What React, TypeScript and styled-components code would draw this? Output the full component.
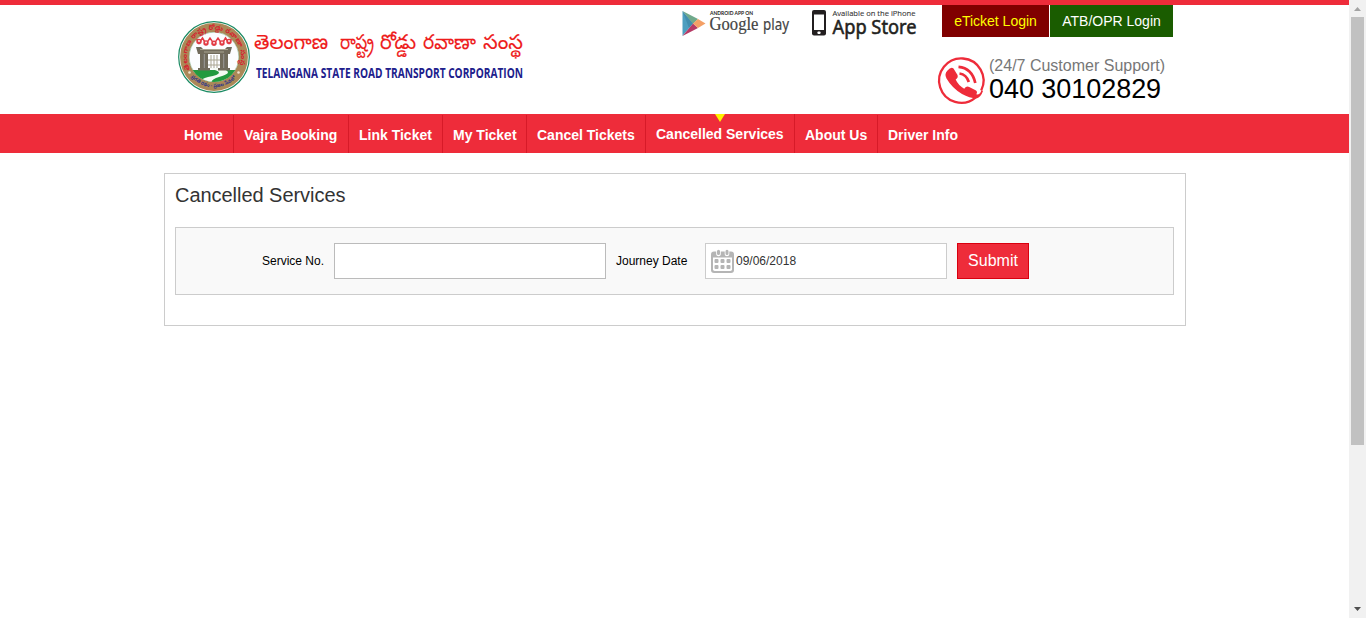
import React from 'react';
import styled, { createGlobalStyle } from 'styled-components';

const RED = '#ee2c3a';

const GlobalStyle = createGlobalStyle`
  * { box-sizing: border-box; }
  body {
    margin: 0;
    overflow: hidden;
    background: #fff;
    color: #000;
    font-family: "Liberation Sans", Arial, sans-serif;
  }
  svg { overflow: visible; flex-shrink: 0; }
`;

const Screen = styled.div`
  display: flex;
  width: 1366px;
  height: 618px;
`;

const Page = styled.div`
  flex: 1;
  min-width: 0;
`;

const Header = styled.header`
  display: flex;
  height: 114px;
  border-top: 5px solid ${RED};
  padding-left: 178px;
`;

const Brand = styled.div`
  display: flex;
  gap: 4px;
  width: 503px;
  padding-top: 16px;
`;

const Stores = styled.div`
  display: flex;
  width: 261px;
`;

const Contact = styled.div`
  width: 231px;
`;

const Logins = styled.div`
  display: flex;
  gap: 1px;
`;

const LoginLink = styled.a<{ $bg: string; $color: string; $width: number }>`
  width: ${(p) => p.$width}px;
  height: 32px;
  background: ${(p) => p.$bg};
  color: ${(p) => p.$color};
  font-size: 14px;
  line-height: 32px;
  text-align: center;
`;

const Support = styled.div`
  display: flex;
  gap: 3px;
  margin: 19px 0 0 -4px;
`;

const SupportText = styled.div`
  padding-top: 1px;
  white-space: nowrap;
`;

const SupportLabel = styled.div`
  color: #777;
  font-size: 16px;
  line-height: 18px;
`;

const SupportNumber = styled.div`
  font-size: 27px;
  letter-spacing: -0.05px;
  line-height: 29px;
`;

const Nav = styled.nav`
  display: flex;
  height: 39px;
  padding-left: 174px;
  background: ${RED};
`;

const NavItem = styled.a<{ $width: number; $active?: boolean; $last?: boolean }>`
  position: relative;
  width: ${(p) => p.$width}px;
  height: ${(p) => (p.$active ? 39 : 38)}px;
  margin-top: ${(p) => (p.$active ? 0 : 1)}px;
  padding-left: 10px;
  border-right: ${(p) => (p.$last ? 'none' : '1px solid #d71a28')};
  color: #fff;
  font-size: 14px;
  font-weight: bold;
  line-height: 40px;
  white-space: nowrap;
`;

const ActiveMark = styled.span`
  position: absolute;
  top: 0;
  left: 69px;
  border: 5px solid transparent;
  border-top: 8px solid #fff000;
  border-bottom: 0;
`;

const Panel = styled.main`
  width: 1022px;
  height: 153px;
  margin: 20px 0 0 164px;
  padding: 8px 11px 0 10px;
  border: 1px solid #ccc;
`;

const Title = styled.h1`
  margin: 0 0 18px;
  color: #333;
  font-size: 20px;
  font-weight: normal;
  letter-spacing: -0.04px;
  line-height: 27px;
`;

const SearchForm = styled.div`
  display: flex;
  height: 68px;
  padding: 15px 0 0 86px;
  border: 1px solid #ccc;
  background: #f9f9f9;
`;

const Label = styled.label<{ $width: number }>`
  width: ${(p) => p.$width}px;
  font-size: 12px;
  line-height: 36px;
  white-space: nowrap;
`;

const Field = styled.div<{ $width: number; $gap: number; $border: string }>`
  display: flex;
  align-items: center;
  gap: 2px;
  width: ${(p) => p.$width}px;
  height: 36px;
  margin-right: ${(p) => p.$gap}px;
  padding-left: 5px;
  border: 1px solid ${(p) => p.$border};
  background: #fff;
  color: #333;
  font-size: 12px;
`;

const SubmitButton = styled.button`
  width: 72px;
  height: 36px;
  padding: 0;
  border: 1px solid #d9000f;
  background: ${RED};
  color: #fff;
  font-family: inherit;
  font-size: 16px;
`;

const Scrollbar = styled.div`
  display: flex;
  flex-direction: column;
  align-items: center;
  width: 17px;
  background: #f1f1f1;
`;

const ScrollThumb = styled.div`
  width: 13px;
  height: 428px;
  margin-bottom: 156px;
  background: #c1c1c1;
`;

const Emblem = () => (
  <svg width="72" height="72" viewBox="0 0 72 72">
    <defs>
      <path id="arcTop" d="M12.2 48.5A27 27 0 1 1 59.8 48.5" />
      <path id="arcBottom" d="M10 52A31 31 0 0 0 62 52" />
      <clipPath id="disc"><circle cx="36" cy="36" r="25" /></clipPath>
    </defs>
    <circle cx="36" cy="36" r="35.3" fill="#fff" stroke="#198a62" strokeWidth="1.2" />
    <circle cx="36" cy="36" r="29.4" fill="none" stroke="#ab8857" strokeWidth="9" />
    <circle cx="36" cy="36" r="24.8" fill="#fcfdff" stroke="#6d9c70" strokeWidth=".5" />
    <g clipPath="url(#disc)">
      <path d="M9 49h54v15H9z" fill="#229a3f" />
      <path d="M30 47q22 5 0 9q-10 3-11 8h15q-3-5 7-8q18-5 0-9z" fill="#f4faf3" />
      <g fill="#e23c45">
        <circle cx="21" cy="20.500" r="2.700" />
        <circle cx="28" cy="22" r="2.700" />
        <circle cx="36" cy="22.300" r="2.700" />
        <circle cx="44" cy="22" r="2.700" />
        <circle cx="51" cy="20.500" r="2.700" />
      </g>
      <path d="M18 17l3 5 3.500-5 3.500 6 4-6 4 6 4-6 4 6 3.500-6 3.500 5 3-5" fill="none" stroke="#e23c45" strokeWidth="1.500" />
      <g fill="#fff">
        <circle cx="21" cy="20" r=".9" />
        <circle cx="28" cy="21.500" r=".9" />
        <circle cx="36" cy="21.800" r=".9" />
        <circle cx="44" cy="21.500" r=".9" />
        <circle cx="51" cy="20" r=".9" />
      </g>
    </g>
    <g fill="#716b5c">
      <path d="M18 26h5l2 2h22l2-2h5l-2 7H20z" />
      <path d="M22 32h3.500v16H22zM27 32h3v16h-3zM42 32h3v16h-3zM46.500 32H50v16h-3.500z" />
      <path d="M20 47h12v2.500H20zM40 47h12v2.500H40z" />
    </g>
    <path d="M22 28.500h28M26 31h20M33 34v13M36 34v13M39 34v13M30 39h12M30 44h12" stroke="#aaa692" strokeWidth="1" />
    <path d="M26 33v14M46 33v14" stroke="#4e4a40" strokeWidth="1.200" />
    <circle cx="11.500" cy="51.500" r="1.300" fill="#ece2ce" />
    <circle cx="60.500" cy="51.500" r="1.300" fill="#ece2ce" />
    <text fill="#d61f30" fontFamily='"Noto Sans Telugu", "Noto Sans", sans-serif' fontWeight="bold" fontSize="6.800">
      <textPath href="#arcTop" textLength="106" lengthAdjust="spacingAndGlyphs">తెలంగాణ రాష్ట్ర రోడ్డు రవాణా సంస్థ</textPath>
    </text>
    <text fill="#2c348c" fontFamily='"Noto Sans Telugu", "Noto Sans", sans-serif' fontWeight="bold" fontSize="5">
      <textPath href="#arcBottom" startOffset="5" textLength="50" lengthAdjust="spacingAndGlyphs">ప్రగతి రథం - ప్రజల సేవలో</textPath>
    </text>
  </svg>
);

const Wordmark = () => (
  <svg width="275" height="72">
    <g fill="#ee1c1c" stroke="#ee1c1c" strokeWidth=".15" fontFamily='"Noto Sans Telugu", "Noto Sans", sans-serif' fontSize="20.500">
      <text x="0" y="28" textLength="74" lengthAdjust="spacingAndGlyphs">తెలంగాణ</text>
      <text x="86" y="28" textLength="34" lengthAdjust="spacingAndGlyphs">రాష్ట్ర</text>
      <text x="126" y="28" textLength="36" lengthAdjust="spacingAndGlyphs">రోడ్డు</text>
      <text x="169" y="28" textLength="53" lengthAdjust="spacingAndGlyphs">రవాణా</text>
      <text x="229" y="28" textLength="40" lengthAdjust="spacingAndGlyphs">సంస్థ</text>
    </g>
    <text x="2" y="56.700" fill="#20208c" fontFamily='"Open Sans", sans-serif' fontWeight="bold" fontSize="14.500" textLength="267" lengthAdjust="spacingAndGlyphs">
      TELANGANA STATE ROAD TRANSPORT CORPORATION
    </text>
  </svg>
);

const GooglePlay = () => (
  <svg width="130" height="36">
    <path d="M1.500 6v25L12 18.500z" fill="#4d9fc0" />
    <path d="M1.500 6l15.500 8-5 5z" fill="#70a98b" />
    <path d="M1.500 31L17 23l-5-4.500z" fill="#b63a65" />
    <path d="M17 14l7.500 4.500L17 23l-5-4.500z" fill="#f4a066" />
    <path d="M1.500 6L12 18.500 8 23z" fill="#367e9e" opacity=".5" />
    <text x="29" y="9.500" fill="#222" fontFamily="Lato, sans-serif" fontWeight="bold" fontSize="4.900" textLength="43" lengthAdjust="spacingAndGlyphs">ANDROID APP ON</text>
    <text x="28.500" y="25" fill="#444" stroke="#444" strokeWidth=".2" fontFamily='"Liberation Serif", serif' fontSize="18.500" textLength="49" lengthAdjust="spacingAndGlyphs">Google</text>
    <text x="82" y="25" fill="#444" stroke="#444" strokeWidth=".2" fontFamily='"Noto Sans", sans-serif' fontSize="17" textLength="26" lengthAdjust="spacingAndGlyphs">play</text>
  </svg>
);

const AppStore = () => (
  <svg width="110" height="36">
    <rect x="1" y="5" width="14" height="25.500" rx="2" fill="#231f20" />
    <rect x="3" y="9.500" width="10" height="15.500" fill="#fff" />
    <rect x="6.500" y="26.500" width="3" height="2.500" rx=".7" fill="#fff" />
    <text x="21.500" y="10.700" fill="#333" stroke="#333" strokeWidth=".1" fontFamily='"Open Sans", sans-serif' fontSize="7.800" textLength="83" lengthAdjust="spacingAndGlyphs">Available on the iPhone</text>
    <text x="21.500" y="29" fill="#231f20" stroke="#231f20" strokeWidth=".55" fontFamily='"Noto Sans", sans-serif' fontSize="19.500" textLength="84" lengthAdjust="spacingAndGlyphs">App Store</text>
  </svg>
);

const SupportIcon = () => (
  <svg width="48" height="48" viewBox="0 0 48 48">
    <path d="M43.200 34.500A22.200 22.200 0 1 0 37.500 41.700" fill="none" stroke={RED} strokeWidth="2.300" />
    <path
      d="M9.500 14.500Q13 10.500 15.500 12.500L19.500 19Q20.500 21.500 17.700 23.500Q20 29 26.200 32.700Q28.500 29.600 31.200 31L37.600 34.300Q40 35.900 38.300 38.300Q42 39 43.300 34.500L45 35Q43 41 38.500 42.500Q31.500 42 24 38Q14 32 8.500 22.500Q6 18 9.500 14.500Z"
      fill={RED}
    />
    <path d="M20.500 10.800Q34 12 37.300 27M21.500 17.500Q28.500 18.500 30.800 26" fill="none" stroke={RED} strokeWidth="2.700" />
  </svg>
);

const CalendarIcon = () => (
  <svg width="23" height="24" viewBox="0 0 23 24">
    <path d="M3 2.500h17q3 0 3 3V21q0 3-3 3H3q-3 0-3-3V5.500q0-3 3-3z" fill="#b5b5b5" />
    <path d="M2 8.500h19v11.800q0 1.700-1.700 1.700H3.700Q2 22 2 20.300z" fill="#fff" />
    <path d="M7.500 2v3M16 2v3" stroke="#fff" strokeWidth="4.600" strokeLinecap="round" />
    <path d="M7.500 2.200v2.300M16 2.200v2.300" stroke="#b5b5b5" strokeWidth="3" strokeLinecap="round" />
    <g fill="#b5b5b5">
      {[3.5, 9.5, 15.5].map((x) =>
        [10, 16].map((y) => <rect key={`${x}-${y}`} x={x} y={y} width="4" height="4" rx="1" />)
      )}
    </g>
  </svg>
);

const NAV_ITEMS = [
  { label: 'Home', width: 60 },
  { label: 'Vajra Booking', width: 115 },
  { label: 'Link Ticket', width: 94 },
  { label: 'My Ticket', width: 84 },
  { label: 'Cancel Tickets', width: 119 },
  { label: 'Cancelled Services', width: 149, active: true },
  { label: 'About Us', width: 83 },
  { label: 'Driver Info', width: 90, last: true },
];

export default function App() {
  return (
    <Screen>
      <GlobalStyle />
      <Page>
        <Header>
          <Brand>
            <Emblem />
            <Wordmark />
          </Brand>
          <Stores>
            <GooglePlay />
            <AppStore />
          </Stores>
          <Contact>
            <Logins>
              <LoginLink $bg="#800000" $color="#ffff00" $width={107}>eTicket Login</LoginLink>
              <LoginLink $bg="#1a5c00" $color="#fff" $width={123}>ATB/OPR Login</LoginLink>
            </Logins>
            <Support>
              <SupportIcon />
              <SupportText>
                <SupportLabel>(24/7 Customer Support)</SupportLabel>
                <SupportNumber>040 30102829</SupportNumber>
              </SupportText>
            </Support>
          </Contact>
        </Header>
        <Nav>
          {NAV_ITEMS.map((item) => (
            <NavItem key={item.label} $width={item.width} $active={item.active} $last={item.last}>
              {item.active && <ActiveMark />}
              {item.label}
            </NavItem>
          ))}
        </Nav>
        <Panel>
          <Title>Cancelled Services</Title>
          <SearchForm>
            <Label $width={72}>Service No.</Label>
            <Field $width={272} $gap={10} $border="#bbb" />
            <Label $width={89}>Journey Date</Label>
            <Field $width={242} $gap={10} $border="#ccc">
              <CalendarIcon />
              09/06/2018
            </Field>
            <SubmitButton>Submit</SubmitButton>
          </SearchForm>
        </Panel>
      </Page>
      <Scrollbar>
        <svg width="17" height="17">
          <path d="M5 11h7L8.500 7z" fill="#a3a3a3" />
        </svg>
        <ScrollThumb />
        <svg width="17" height="17">
          <path d="M5 6h7L8.500 10z" fill="#505050" />
        </svg>
      </Scrollbar>
    </Screen>
  );
}
